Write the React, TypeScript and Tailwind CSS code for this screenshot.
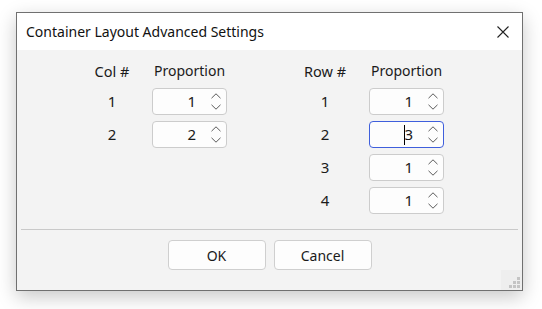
import React from "react";

const font = { fontFamily: '"Segoe UI", "Noto Sans", "Open Sans", sans-serif' };

function Chevron({ up }: { up?: boolean }) {
  return (
    <svg width="10" height="6" viewBox="0 0 10 6" className="block">
      <path
        d={up ? "M0.5 5.2 L5 0.8 L9.5 5.2" : "M0.5 0.8 L5 5.2 L9.5 0.8"}
        fill="none"
        stroke="#5a5a5a"
        strokeWidth="1"
      />
    </svg>
  );
}

function Spin({ value, focused }: { value: string; focused?: boolean }) {
  return (
    <div
      className={
        "flex h-[27px] w-[75px] items-center rounded-[4px] border bg-[#fdfdfd] " +
        (focused ? "border-[#3f5fdc]" : "border-[#cccccc]")
      }
    >
      <div className="relative flex flex-1 items-center justify-end pr-[15px] text-[15px] text-[#1a1a1a]">
        {focused && <span className="mr-[-1px] inline-block h-[20px] w-[1px] bg-black" />}
        <span>{value}</span>
      </div>
      <div className="flex w-[15px] flex-col items-start justify-center gap-[5px]">
        <Chevron up />
        <Chevron />
      </div>
    </div>
  );
}

function Table({
  head,
  rows,
  gap,
}: {
  head: string;
  rows: { v: string; focused?: boolean }[];
  gap: string;
}) {
  return (
    <div className={"grid grid-cols-[56px_75px] items-center gap-y-[6px] " + gap}>
      <div className="mb-[1px] h-[20px] text-center text-[14.5px] leading-[20px] text-[#1a1a1a]">{head}</div>
      <div className="mb-[1px] h-[20px] text-center text-[14px] leading-[20px] text-[#1a1a1a]">Proportion</div>
      {rows.map((r, i) => (
        <React.Fragment key={i}>
          <div className="text-center text-[15px] text-[#1a1a1a]">{i + 1}</div>
          <Spin value={r.v} focused={r.focused} />
        </React.Fragment>
      ))}
    </div>
  );
}

export default function App() {
  return (
    <div className="h-[309px] w-[542px] overflow-hidden bg-white pl-[16px] pt-[12px]" style={font}>
      <div className="relative flex h-[279px] w-[507px] flex-col border border-[#707070] bg-[#f3f3f3] shadow-[0_6px_18px_rgba(0,0,0,0.22)]">
        <div className="flex h-[37px] items-center justify-between bg-white pl-[9px] pr-[13px]">
          <span className="text-[14px] text-[#111]">Container Layout Advanced Settings</span>
          <svg width="12" height="12" viewBox="0 0 12 12">
            <path d="M0.5 0.5 L11.5 11.5 M11.5 0.5 L0.5 11.5" stroke="#222" strokeWidth="1.1" />
          </svg>
        </div>
        <div className="flex flex-1 flex-col">
          <div className="flex h-[179px] items-start gap-[70px] pl-[67px] pt-[11px]">
            <Table head="Col #" gap="gap-x-[12px]" rows={[{ v: "1" }, { v: "2" }]} />
            <Table
              head="Row #"
              gap="gap-x-[16px]"
              rows={[{ v: "1" }, { v: "3", focused: true }, { v: "1" }, { v: "1" }]}
            />
          </div>
          <div className="mx-[4px] h-[1px] bg-[#c9c9c9]" />
          <div className="flex justify-center gap-[8px] pt-[10px]">
            <button className="h-[30px] w-[98px] rounded-[4px] border border-[#cfcfcf] bg-[#fdfdfd] text-[14px] text-[#1a1a1a]">
              OK
            </button>
            <button className="h-[30px] w-[98px] rounded-[4px] border border-[#cfcfcf] bg-[#fdfdfd] text-[14px] text-[#1a1a1a]">
              Cancel
            </button>
          </div>
        </div>
        <div className="absolute bottom-0 right-0 h-[20px] w-[21px] bg-[#eeeeee]">
          <div className="absolute bottom-[2px] right-[2px] grid grid-cols-3 gap-[1px]">
            <span className="h-[3px] w-[3px]" />
            <span className="h-[3px] w-[3px]" />
            <span className="h-[3px] w-[3px] bg-[#c4c4c4]" />
            <span className="h-[3px] w-[3px]" />
            <span className="h-[3px] w-[3px] bg-[#c4c4c4]" />
            <span className="h-[3px] w-[3px] bg-[#c4c4c4]" />
            <span className="h-[3px] w-[3px] bg-[#c4c4c4]" />
            <span className="h-[3px] w-[3px] bg-[#c4c4c4]" />
            <span className="h-[3px] w-[3px] bg-[#c4c4c4]" />
          </div>
        </div>
      </div>
    </div>
  );
}
